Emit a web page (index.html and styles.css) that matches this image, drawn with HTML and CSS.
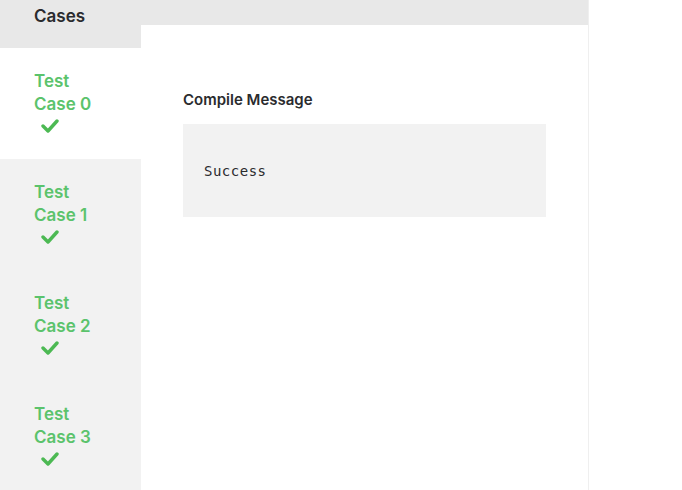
FILE: index.html
```html
<!DOCTYPE html>
<html>
<head>
<meta charset="utf-8">
<link rel="stylesheet" href="styles.css">
</head>
<body>
<div class="layout">
  <aside class="sidebar">
    <div class="sidebar-head">Cases</div>
    <div class="tab active">
      <div class="tab-label">Test<br>Case 0</div>
      <svg class="check" width="18" height="14" viewBox="0 0 18 14"><polyline points="2,7 7,12 16,2" fill="none" stroke="#4cb953" stroke-width="3.4" stroke-linecap="round" stroke-linejoin="round"/></svg>
    </div>
    <div class="tab">
      <div class="tab-label">Test<br>Case 1</div>
      <svg class="check" width="18" height="14" viewBox="0 0 18 14"><polyline points="2,7 7,12 16,2" fill="none" stroke="#4cb953" stroke-width="3.4" stroke-linecap="round" stroke-linejoin="round"/></svg>
    </div>
    <div class="tab">
      <div class="tab-label">Test<br>Case 2</div>
      <svg class="check" width="18" height="14" viewBox="0 0 18 14"><polyline points="2,7 7,12 16,2" fill="none" stroke="#4cb953" stroke-width="3.4" stroke-linecap="round" stroke-linejoin="round"/></svg>
    </div>
    <div class="tab">
      <div class="tab-label">Test<br>Case 3</div>
      <svg class="check" width="18" height="14" viewBox="0 0 18 14"><polyline points="2,7 7,12 16,2" fill="none" stroke="#4cb953" stroke-width="3.4" stroke-linecap="round" stroke-linejoin="round"/></svg>
    </div>
  </aside>
  <main class="main">
    <div class="main-head"></div>
    <div class="content">
      <h3 class="title">Compile Message</h3>
      <div class="msg"><pre class="msg-text">Success</pre></div>
    </div>
  </main>
</div>
</body>
</html>
```
FILE: styles.css
```css
html, body {
  margin: 0;
  padding: 0;
  background: #fff;
  height: 100%;
  overflow: hidden;
}
body {
  font-family: "Inter", "Liberation Sans", sans-serif;
}
.layout {
  display: flex;
  height: 490px;
}
.sidebar {
  width: 141px;
  flex: none;
  background: #f2f2f2;
  display: flex;
  flex-direction: column;
  overflow: hidden;
}
.sidebar-head {
  flex: none;
  height: 48px;
  box-sizing: border-box;
  background: #e8e8e8;
  padding: 4px 0 0 34px;
  font-size: 17px;
  font-weight: 600;
  line-height: 24px;
  color: #2a2b2e;
}
.tab {
  height: 111px;
  box-sizing: border-box;
  padding: 22px 0 0 34px;
  flex: none;
}
.tab.active {
  background: #fff;
}
.tab-label {
  font-size: 17px;
  line-height: 23px;
  font-weight: 600;
  color: #5bc36c;
}
.check {
  display: block;
  margin: 3px 0 0 7px;
}
.main {
  width: 447px;
  flex: none;
  border-right: 1px solid #efefef;
  display: flex;
  flex-direction: column;
}
.main-head {
  height: 25px;
  background: #e8e8e8;
}
.content {
  padding: 64px 42px 0 42px;
}
.title {
  margin: 0 0 14px 0;
  font-size: 15px;
  line-height: 21px;
  font-weight: 600;
  color: #2a2b2e;
}
.msg {
  background: #f2f2f2;
  height: 93px;
  box-sizing: border-box;
  padding: 39px 21px 0 21px;
}
.msg-text {
  margin: 0;
  font-family: "DejaVu Sans Mono", "Liberation Mono", monospace;
  font-size: 14px;
  line-height: 16px;
  letter-spacing: 0.5px;
  color: #2a2b2e;
}
```
